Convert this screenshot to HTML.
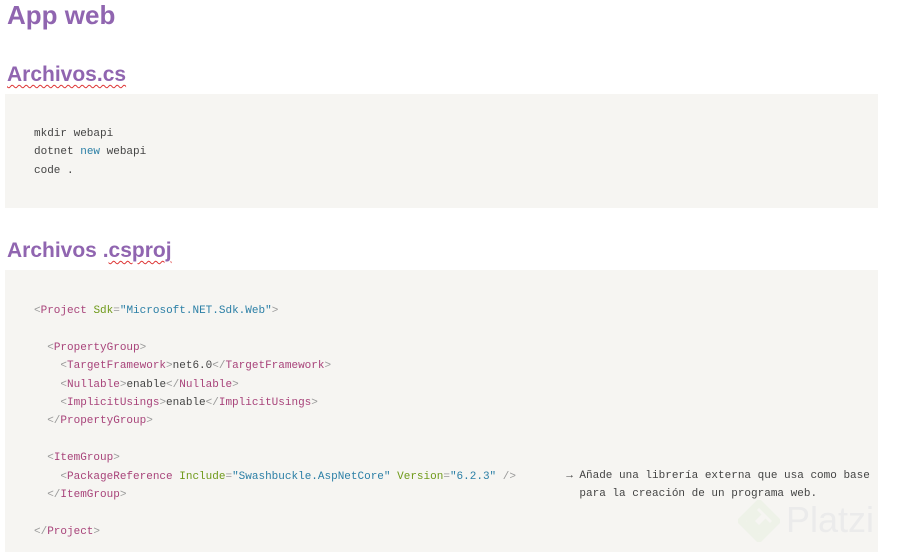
<!DOCTYPE html>
<html><head><meta charset="utf-8"><style>
body{margin:0;background:#fff;width:897px;height:552px;overflow:hidden;position:relative;font-family:"Liberation Sans",sans-serif}
h1,h2{position:absolute;margin:0;color:#9065b0;font-weight:600;left:7px;white-space:nowrap}
h1{top:0px;font-size:26px}
h2{font-size:21px}
.sq{text-decoration:underline wavy #d33;text-decoration-thickness:1px;text-underline-offset:3px}
.blk{position:absolute;left:5px;width:873px;background:#f6f5f2}
pre{position:absolute;margin:0;font-family:"Liberation Mono",monospace;font-size:11px;line-height:18.4px;color:#444}
.t{color:#a8437a}.a{color:#6f9a1a}.s{color:#2b7fa6}.p{color:#999}
</style></head><body>
<h1>App web</h1>
<h2 style="top:63px"><span class="sq">Archivos.cs</span></h2>
<div class="blk" style="top:94px;height:114px"></div>
<pre style="left:34px;top:125px">mkdir webapi
dotnet <span class="s">new</span> webapi
code .</pre>
<h2 style="top:239px">Archivos .<span class="sq">csproj</span></h2>
<div class="blk" style="top:270px;height:282px"></div>
<pre style="left:34px;top:302px"><span class="p">&lt;</span><span class="t">Project</span> <span class="a">Sdk</span><span class="p">=</span><span class="s">"Microsoft.NET.Sdk.Web"</span><span class="p">&gt;</span>

  <span class="p">&lt;</span><span class="t">PropertyGroup</span><span class="p">&gt;</span>
    <span class="p">&lt;</span><span class="t">TargetFramework</span><span class="p">&gt;</span>net6.0<span class="p">&lt;/</span><span class="t">TargetFramework</span><span class="p">&gt;</span>
    <span class="p">&lt;</span><span class="t">Nullable</span><span class="p">&gt;</span>enable<span class="p">&lt;/</span><span class="t">Nullable</span><span class="p">&gt;</span>
    <span class="p">&lt;</span><span class="t">ImplicitUsings</span><span class="p">&gt;</span>enable<span class="p">&lt;/</span><span class="t">ImplicitUsings</span><span class="p">&gt;</span>
  <span class="p">&lt;/</span><span class="t">PropertyGroup</span><span class="p">&gt;</span>

  <span class="p">&lt;</span><span class="t">ItemGroup</span><span class="p">&gt;</span>
    <span class="p">&lt;</span><span class="t">PackageReference</span> <span class="a">Include</span><span class="p">=</span><span class="s">"Swashbuckle.AspNetCore"</span> <span class="a">Version</span><span class="p">=</span><span class="s">"6.2.3"</span> <span class="p">/&gt;</span>
  <span class="p">&lt;/</span><span class="t">ItemGroup</span><span class="p">&gt;</span>

<span class="p">&lt;/</span><span class="t">Project</span><span class="p">&gt;</span></pre>
<pre style="left:553px;top:467px">  → Añade una librería externa que usa como base
    para la creación de un programa web.</pre>
<svg style="position:absolute;left:738px;top:500px" width="42" height="42" viewBox="0 0 42 42"><path d="M21 3 L39 21 L21 39 L3 21 Z M21 12 L12 21 L21 30 L30 21" fill="none" stroke="#eef2e8" stroke-width="7" stroke-linejoin="round"/></svg>
<div style="position:absolute;left:786px;top:499px;font-size:36px;color:#ebebeb;font-family:'Liberation Sans',sans-serif">Platzi</div>
</body></html>
